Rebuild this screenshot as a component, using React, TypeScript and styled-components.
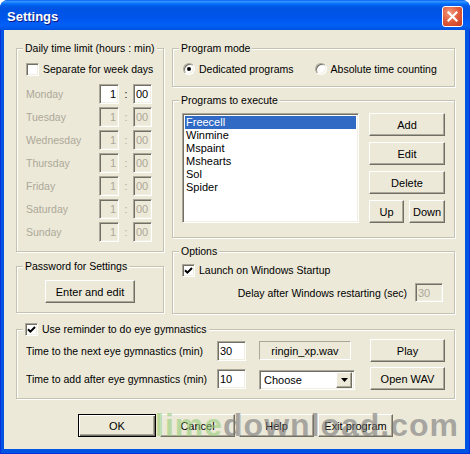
import React from 'react';
import styled, { createGlobalStyle, css } from 'styled-components';

const GlobalStyle = createGlobalStyle`
  html, body { margin: 0; padding: 0; background: #ffffff; }
  body { font-family: "Liberation Sans", Arial, sans-serif; font-size: 10.5px; color: #000; }
  * { box-sizing: border-box; }
`;

const Window = styled.div`
  width: 470px;
  height: 454px;
  display: flex;
  flex-direction: column;
  border-radius: 8px 8px 0 0;
  overflow: hidden;
  background: #0054e3;
`;

const TitleBar = styled.div`
  height: 30px;
  flex: none;
  display: flex;
  align-items: center;
  justify-content: space-between;
  padding: 2px 7px 0 7px;
  background: linear-gradient(180deg, #0058ee 0%, #3593ff 4%, #288eff 7%, #127dff 10%, #036ffc 13%, #0262ee 17%, #0057e5 24%, #0054e3 30%, #0055eb 60%, #005bf5 72%, #0260f5 84%, #0058ea 94%, #0050dc 100%);
`;

const Title = styled.span`
  color: #fff;
  font-weight: bold;
  font-size: 13px;
  text-shadow: 1px 1px #0a1883;
`;

const CloseBox = styled.div`
  width: 21px;
  height: 21px;
  border: 1px solid #fff;
  border-radius: 3px;
  background: radial-gradient(circle at 35% 30%, #f29a7c 0%, #e2603f 45%, #c7391c 100%);
  display: flex;
  align-items: center;
  justify-content: center;
`;

const Frame = styled.div`
  flex: 1;
  display: flex;
  padding: 0 5px 5px 4px;
  background: #0054e3;
  box-shadow: inset 1px 0 #0831d9, inset -1px 0 #0831d9, inset 0 -1px #0831d9;
`;

const Client = styled.div`
  flex: 1;
  display: flex;
  flex-direction: column;
  background: #ece9d8;
  padding: 11px 10px 12px 12px;
`;

const TopSection = styled.div`
  display: grid;
  grid-template-columns: 148px 283px;
  column-gap: 8px;
`;

const Column = styled.div<{ $gap: number }>`
  display: flex;
  flex-direction: column;
  gap: ${(p) => p.$gap}px;
`;

const Group = styled.fieldset<{ $h: number }>`
  margin: 0;
  min-width: 0;
  height: ${(p) => p.$h}px;
  padding: 0 9px 0 9px;
  border: 1px solid #c5c2b2;
  box-shadow: 1px 1px 0 #fff, inset 1px 1px 0 #fff;
`;

const Legend = styled.legend`
  padding: 0 2px;
  margin-left: -3px;
  line-height: 14px;
  height: 14px;
  background: #ece9d8;
  display: flex;
  align-items: center;
  gap: 4px;
  white-space: nowrap;
`;

const CheckRow = styled.label<{ $mt?: number }>`
  display: flex;
  align-items: center;
  gap: 4px;
  height: 14px;
  margin-top: ${(p) => p.$mt ?? 0}px;
  white-space: nowrap;
`;

const Box = styled.span`
  width: 13px;
  height: 13px;
  flex: none;
  background: #fff;
  border: 1px solid;
  border-color: #aca899 #fff #fff #aca899;
  box-shadow: inset 1px 1px #716f64, inset -1px -1px #f1efe2;
  display: flex;
  align-items: center;
  justify-content: center;
`;

const RadioRow = styled.div`
  display: flex;
  align-items: center;
  gap: 21px;
  margin-top: 7px;
  margin-left: 1px;
  height: 14px;
`;

const RadioItem = styled.label`
  display: flex;
  align-items: center;
  gap: 4px;
  white-space: nowrap;
`;

const RadioDot = styled.span<{ $on?: boolean }>`
  width: 12px;
  height: 12px;
  border-radius: 50%;
  background: #fff;
  border: 1px solid;
  border-color: #aca899 #fff #fff #aca899;
  box-shadow: inset 1px 1px #716f64, inset -1px -1px #f1efe2;
  display: flex;
  align-items: center;
  justify-content: center;
  &::after {
    content: '';
    width: 4px;
    height: 4px;
    border-radius: 50%;
    background: ${(p) => (p.$on ? '#000' : 'transparent')};
  }
`;

const DayList = styled.div`
  display: flex;
  flex-direction: column;
  gap: 3px;
  margin-top: 8px;
`;

const DayRow = styled.div`
  display: grid;
  grid-template-columns: 73px 20px 14px 19px;
  align-items: center;
  height: 20px;
`;

const DayName = styled.span`
  color: #aca899;
`;

const Colon = styled.span<{ $off?: boolean }>`
  text-align: center;
  color: ${(p) => (p.$off ? '#aca899' : '#000')};
`;

const sunken = css`
  border: 1px solid;
  border-color: #aca899 #fff #fff #aca899;
  box-shadow: inset 1px 1px #716f64, inset -1px -1px #f1efe2;
`;

const Field = styled.input<{ $w: number; $h?: number; $right?: boolean }>`
  ${sunken};
  width: ${(p) => p.$w}px;
  height: ${(p) => p.$h ?? 20}px;
  padding: 0 2px 0 2px;
  font: inherit;
  font-size: 11px;
  color: #000;
  background: #fff;
  text-align: ${(p) => (p.$right ? 'right' : 'left')};
  outline: none;
  &:disabled {
    background: #ece9d8;
    color: #aca899;
  }
`;

const Button = styled.button<{ $w: number; $default?: boolean }>`
  width: ${(p) => p.$w}px;
  height: 23px;
  padding: 0;
  font: inherit;
  font-size: 11px;
  color: #000;
  background: #ece9d8;
  border: 1px solid;
  border-color: #fff #716f64 #716f64 #fff;
  box-shadow: inset -1px -1px #aca899;
  ${(p) =>
    p.$default &&
    css`
      border-color: #000;
      box-shadow: inset 1px 1px #fff, inset -1px -1px #716f64, inset -2px -2px #aca899;
    `}
`;

const CenterRow = styled.div`
  display: flex;
  justify-content: center;
  margin-top: 7px;
`;

const ProgramsBody = styled.div`
  display: flex;
  gap: 10px;
  margin-top: 6px;
`;

const ListBox = styled.div`
  ${sunken};
  width: 177px;
  height: 110px;
  background: #fff;
  padding: 2px 2px;
  font-size: 11px;
`;

const ListItem = styled.div<{ $selected?: boolean }>`
  height: 13px;
  line-height: 13px;
  padding-left: 1px;
  background: ${(p) => (p.$selected ? '#316ac5' : 'transparent')};
  color: ${(p) => (p.$selected ? '#fff' : '#000')};
`;

const ButtonStack = styled.div`
  display: flex;
  flex-direction: column;
  gap: 6px;
`;

const ButtonPair = styled.div`
  display: flex;
  gap: 5px;
`;

const DelayRow = styled.div`
  display: flex;
  justify-content: flex-end;
  align-items: center;
  gap: 8px;
  margin-top: 6px;
  margin-right: 2px;
  height: 19px;
`;

const EyeGroup = styled(Group)`
  margin-top: 8px;
`;

const EyeGrid = styled.div`
  display: grid;
  grid-template-columns: 191px 42px 111px 75px;
  grid-auto-rows: 23px;
  row-gap: 5px;
  align-items: center;
  margin-top: 3px;
`;

const FileName = styled.div`
  width: 92px;
  height: 19px;
  border: 1px solid;
  border-color: #aca899 #fff #fff #aca899;
  display: flex;
  align-items: center;
  justify-content: center;
  font-size: 11px;
`;

const Combo = styled.div`
  ${sunken};
  width: 96px;
  height: 20px;
  align-self: end;
  background: #fff;
  display: flex;
  align-items: center;
  justify-content: space-between;
  padding: 2px 2px 2px 4px;
  font-size: 11px;
`;

const ComboArrow = styled.span`
  width: 16px;
  height: 16px;
  background: #ece9d8;
  border: 1px solid;
  border-color: #fff #716f64 #716f64 #fff;
  box-shadow: inset -1px -1px #aca899;
  display: flex;
  align-items: center;
  justify-content: center;
`;

const ButtonBar = styled.div`
  position: relative;
  display: flex;
  justify-content: center;
  gap: 4px;
  margin-top: 15px;
`;

const Watermark = styled.div`
  position: absolute;
  left: 139px;
  top: -5px;
  font-family: "Liberation Sans", Arial, sans-serif;
  font-weight: bold;
  font-size: 32px;
  line-height: 32px;
  letter-spacing: 1px;
  white-space: nowrap;
  pointer-events: none;
  color: rgba(120, 120, 120, 0.6);
`;

const Lime = styled.span`
  color: rgba(150, 205, 120, 0.6);
`;

const Check = () => (
  <svg width="9" height="9" viewBox="0 0 9 9">
    <path d="M1 4.2 L3.4 6.6 L8 2" stroke="#000" strokeWidth="2" fill="none" />
  </svg>
);

const days = ['Monday', 'Tuesday', 'Wednesday', 'Thursday', 'Friday', 'Saturday', 'Sunday'];
const programs = ['Freecell', 'Winmine', 'Mspaint', 'Mshearts', 'Sol', 'Spider'];

export default function App() {
  return (
    <>
      <GlobalStyle />
      <Window>
        <TitleBar>
          <Title>Settings</Title>
          <CloseBox>
            <svg width="13" height="13" viewBox="0 0 13 13">
              <path d="M2.5 2.5 L10.5 10.5 M10.5 2.5 L2.5 10.5" stroke="#fff" strokeWidth="2.2" strokeLinecap="square" />
            </svg>
          </CloseBox>
        </TitleBar>
        <Frame>
          <Client>
            <TopSection>
              <Column $gap={7}>
                <Group $h={211}>
                  <Legend>Daily time limit (hours : min)</Legend>
                  <CheckRow $mt={7}>
                    <Box />
                    Separate for week days
                  </CheckRow>
                  <DayList>
                    {days.map((d, i) => (
                      <DayRow key={d}>
                        <DayName>{d}</DayName>
                        <Field $w={20} $right defaultValue="1" disabled={i > 0} />
                        <Colon $off={i > 0}>:</Colon>
                        <Field $w={19} defaultValue="00" disabled={i > 0} />
                      </DayRow>
                    ))}
                  </DayList>
                </Group>
                <Group $h={54}>
                  <Legend>Password for Settings</Legend>
                  <CenterRow>
                    <Button $w={90}>Enter and edit</Button>
                  </CenterRow>
                </Group>
              </Column>
              <Column $gap={6}>
                <Group $h={46}>
                  <Legend>Program mode</Legend>
                  <RadioRow>
                    <RadioItem>
                      <RadioDot $on />
                      Dedicated programs
                    </RadioItem>
                    <RadioItem>
                      <RadioDot />
                      Absolute time counting
                    </RadioItem>
                  </RadioRow>
                </Group>
                <Group $h={145}>
                  <Legend>Programs to execute</Legend>
                  <ProgramsBody>
                    <ListBox>
                      {programs.map((p, i) => (
                        <ListItem key={p} $selected={i === 0}>
                          {p}
                        </ListItem>
                      ))}
                    </ListBox>
                    <ButtonStack>
                      <Button $w={76}>Add</Button>
                      <Button $w={76}>Edit</Button>
                      <Button $w={76}>Delete</Button>
                      <ButtonPair>
                        <Button $w={35}>Up</Button>
                        <Button $w={36}>Down</Button>
                      </ButtonPair>
                    </ButtonStack>
                  </ProgramsBody>
                </Group>
                <Group $h={70}>
                  <Legend>Options</Legend>
                  <CheckRow $mt={5}>
                    <Box>
                      <Check />
                    </Box>
                    Launch on Windows Startup
                  </CheckRow>
                  <DelayRow>
                    Delay after Windows restarting (sec)
                    <Field $w={28} $h={19} defaultValue="30" disabled />
                  </DelayRow>
                </Group>
              </Column>
            </TopSection>
            <EyeGroup $h={77}>
              <Legend>
                <Box>
                  <Check />
                </Box>
                Use reminder to do eye gymnastics
              </Legend>
              <EyeGrid>
                <span>Time to the next eye gymnastics (min)</span>
                <Field $w={29} defaultValue="30" />
                <FileName>ringin_xp.wav</FileName>
                <Button $w={75}>Play</Button>
                <span>Time to add after eye gymnastics (min)</span>
                <Field $w={29} defaultValue="10" />
                <Combo>
                  Choose
                  <ComboArrow>
                    <svg width="7" height="4" viewBox="0 0 7 4">
                      <path d="M0 0 H7 L3.5 4 Z" fill="#000" />
                    </svg>
                  </ComboArrow>
                </Combo>
                <Button $w={75}>Open WAV</Button>
              </EyeGrid>
            </EyeGroup>
            <ButtonBar>
              <Button $w={78} $default>OK</Button>
              <Button $w={75}>Cancel</Button>
              <Button $w={75}>Help</Button>
              <Button $w={75}>Exit program</Button>
              <Watermark>
                <Lime>lime</Lime>download.com
              </Watermark>
            </ButtonBar>
          </Client>
        </Frame>
      </Window>
    </>
  );
}
